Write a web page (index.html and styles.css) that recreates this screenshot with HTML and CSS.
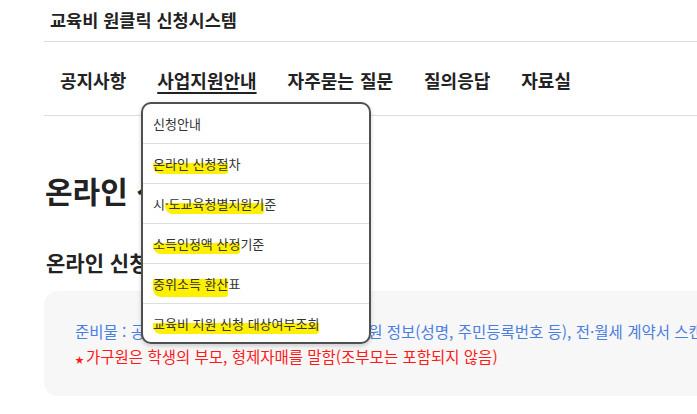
FILE: index.html
```html
<!DOCTYPE html>
<html lang="ko">
<head>
<meta charset="utf-8">
<title>교육비 원클릭 신청시스템</title>
<link rel="stylesheet" href="styles.css">
</head>
<body>
<div class="page">
  <header class="header">
    <div class="title">교육비 원클릭 신청시스템</div>
  </header>
  <nav class="nav">
    <a class="nav-item">공지사항</a>
    <a class="nav-item active">사업지원안내</a>
    <a class="nav-item">자주묻는 질문</a>
    <a class="nav-item">질의응답</a>
    <a class="nav-item">자료실</a>
    <ul class="dropdown">
      <li class="dd-item">신청안내</li>
      <li class="dd-item"><mark class="hl">온라인 신청절</mark>차</li>
      <li class="dd-item">시<mark class="hl">·도교육청별지원기</mark>준</li>
      <li class="dd-item"><mark class="hl">소득인정액 산정</mark>기준</li>
      <li class="dd-item"><mark class="hl hl-tall">중위소득 환산</mark>표</li>
      <li class="dd-item"><mark class="hl">교육비 지원 신청 대상여부조회</mark></li>
    </ul>
  </nav>
  <main class="content">
    <h1 class="h1">온라인 신청절차</h1>
    <h2 class="h2">온라인 신청 전 준비사항</h2>
    <div class="notice">
      <p class="line blue">준비물 : 공동인증서(구 공인인증서), 학생가구원 정보(성명, 주민등록번호 등), 전·월세 계약서 스캔본</p>
      <p class="line red"><span class="star">★</span>가구원은 학생의 부모, 형제자매를 말함(조부모는 포함되지 않음)</p>
    </div>
  </main>
</div>
</body>
</html>
```
FILE: styles.css
```css
html, body {
  margin: 0;
  padding: 0;
  background: #fff;
  overflow: hidden;
}
body {
  font-family: "Noto Sans CJK KR", "Noto Sans", sans-serif;
  color: #222;
}
.page {
  margin-left: 44px;
  width: 1000px;
}
.header {
  height: 41px;
  border-bottom: 1px solid #dcdcdc;
}
.title {
  padding-left: 6px;
  line-height: 40px;
  font-size: 17.5px;
  font-weight: 700;
  color: #222;
}
.nav {
  position: relative;
  display: flex;
  align-items: center;
  gap: 31px;
  height: 74px;
  padding-left: 16px;
  padding-top: 3px;
  box-sizing: border-box;
  border-bottom: 1px solid #dcdcdc;
}
.nav-item {
  font-size: 18px;
  font-weight: 700;
  color: #222;
  text-decoration: none;
  line-height: 24px;
  word-spacing: 1px;
}
.nav-item.active {
  text-decoration: underline;
  text-decoration-thickness: 1.5px;
  text-underline-offset: 4px;
}
.dropdown {
  position: absolute;
  left: 97px;
  top: 60px;
  width: 226px;
  margin: 0;
  padding: 0;
  list-style: none;
  background: #fff;
  border: 2px solid #505050;
  border-radius: 10px;
  box-shadow: 0 2px 4px rgba(0, 0, 0, 0.18);
  z-index: 10;
}
.dd-item {
  height: 39px;
  line-height: 39px;
  padding-left: 10px;
  font-size: 13px;
  color: #333;
  border-bottom: 1px solid #dedede;
  white-space: nowrap;
}
.dd-item:last-child {
  border-bottom: none;
  height: 38px;
}
.hl {
  color: inherit;
  background: linear-gradient(to bottom, transparent 52%, #fff000 52%, #fff000 100%);
  border-radius: 2px 6px 3px 8px;
  padding: 2px 0 1px;
}
.hl-tall {
  background: linear-gradient(to bottom, transparent 30%, #fff000 30%, #fff000 100%);
  padding-bottom: 4px;
}
.content {
  padding-top: 56px;
}
.h1 {
  margin: 0 0 0 1px;
  font-size: 30px;
  line-height: 36px;
  font-weight: 700;
  color: #222;
  white-space: nowrap;
}
.h2 {
  margin: 39px 0 0 2px;
  font-size: 21px;
  line-height: 30px;
  font-weight: 700;
  color: #222;
  white-space: nowrap;
}
.notice {
  margin-top: 14px;
  background: #f7f7f7;
  border-radius: 14px;
  padding: 28px 31px 24px;
}
.line {
  margin: 0;
  font-size: 15.5px;
  line-height: 25px;
  white-space: nowrap;
}
.blue { color: #4a7fe0; }
.red { color: #ff1a1a; }
.star {
  font-size: 9px;
  margin-right: 2px;
  vertical-align: baseline;
}
```
